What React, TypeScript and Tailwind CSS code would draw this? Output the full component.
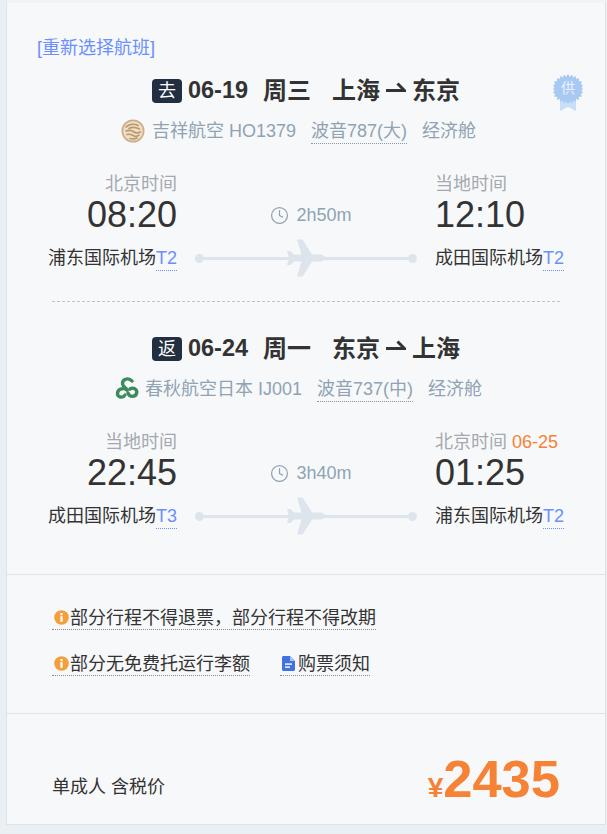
import type { ReactNode } from "react";
import { Clock } from "lucide-react";

const FONT = "font-['Liberation_Sans','Noto_Sans_CJK_SC',sans-serif]";

function Plane() {
  return (
    <svg width="38" height="38" viewBox="0 0 38 38" className="absolute left-1/2 top-1/2 -translate-x-1/2 -translate-y-1/2">
      <path
        d="M0 12 L3.5 12 L7 15.5 L14.5 15.5 L10 0.5 L15.5 0.5 L25 15.5 L33 15.5 C36 15.5 38 17.5 38 19 C38 20.5 36 22.5 33 22.5 L25 22.5 L15.5 37.5 L10 37.5 L14.5 22.5 L7 22.5 L3.5 26 L0 26 L2 19 Z"
        fill="#dde4eb"
      />
    </svg>
  );
}

function Arrow() {
  return (
    <svg width="20" height="12" viewBox="0 0 20 12" className="mx-[6px] -mt-[6px]">
      <path d="M0 8.5 H18.5 L11.5 1.5" fill="none" stroke="#333" strokeWidth="3" />
    </svg>
  );
}

function JuneyaoLogo() {
  return (
    <svg width="24" height="24" viewBox="0 0 24 24" className="mr-[7px] shrink-0">
      <circle cx="12" cy="12" r="11.5" fill="#cfae87" />
      <circle cx="12" cy="12" r="9.8" fill="#ecdfcd" />
      <g fill="none" stroke="#bd9868" strokeWidth="1.7" strokeLinecap="round">
        <path d="M5 8 C8 5 13 4.5 17 6.5" />
        <path d="M8 9.5 C11 7.8 15 8.5 18.5 10" />
        <path d="M5 12 C8 11 11 11.5 13 13 C15 14.5 17 14 19.5 13" />
        <path d="M6 15.5 C9 14.5 11 16 13 17 C15 17.8 17 17 18 16" />
        <path d="M9 19.5 C11 20 14 20 16 19" />
      </g>
    </svg>
  );
}

function SpringLogo() {
  return (
    <svg width="24" height="24" viewBox="0 0 24 24" className="mr-[6px] shrink-0">
      <g fill="none" stroke="#3d8a5f" strokeWidth="3.4" strokeLinecap="round">
        <path d="M17 4 C14 0.5 7.5 1.5 7.5 6.5 C7.5 10 11 10.5 12 13" />
        <path d="M12 13 C9 10.5 3 11.5 2.5 16 C2 20.5 8 21.5 10 18" />
        <path d="M13 16 C14.5 20.5 20.5 20.5 21.7 16 C22.5 12 18 10 15 12" />
      </g>
    </svg>
  );
}

function Badge() {
  return (
    <div className="absolute left-[546px] top-[71px] h-[38px] w-[30px]">
      <svg width="30" height="38" viewBox="0 0 30 38" className="absolute inset-0">
        <path d="M7 22 L7 37 L15 33 L23 37 L23 22 Z" fill="#c9def8" />
        <polygon
          fill="#a8caf2"
          points="15,0 16.8,2.7 19,0.6 20.1,3.6 22.7,2 23.1,5.1 26,4.1 25.8,7.2 28.9,7.2 28,10.2 30,11.2 28.4,13.9 30.5,15 28.4,16.1 30,18.8 27.9,19.8 28.9,22.8 25.8,22.8 26,25.9 23.1,24.9 22.7,28 20.1,26.4 19,29.4 16.8,27.3 15,30 13.2,27.3 11,29.4 9.9,26.4 7.3,28 6.9,24.9 4,25.9 4.2,22.8 1.1,22.8 2.1,19.8 0,18.8 1.6,16.1 -0.5,15 1.6,13.9 0,11.2 2,10.2 1.1,7.2 4.2,7.2 4,4.1 6.9,5.1 7.3,2 9.9,3.6 11,0.6 13.2,2.7"
        />
      </svg>
      <span className="absolute left-0 top-[3px] w-full text-center text-[14px] leading-[22px] text-[#eaf2fc]">供</span>
    </div>
  );
}

type Seg = {
  tag: string;
  date: string;
  week: string;
  from: string;
  to: string;
  logo: ReactNode;
  airline: string;
  plane: string;
  leftLabel: string;
  rightLabel: string;
  rightExtra?: string;
  dep: string;
  arr: string;
  dur: string;
  depAir: string;
  depT: string;
  arrAir: string;
  arrT: string;
};

function Segment({ s }: { s: Seg }) {
  return (
    <div>
      <div className="flex h-[36px] items-center justify-center text-[#333333]">
        <span className="flex h-[24px] w-[30px] items-center justify-center rounded-[4px] bg-[#222f40] text-[18px] leading-none font-normal text-white">
          {s.tag}
        </span>
        <span className="ml-[6px] text-[23.5px] font-bold">{s.date}</span>
        <span className="ml-[15px] text-[24px] font-bold">{s.week}</span>
        <span className="ml-[21px] text-[24px] font-bold">{s.from}</span>
        <Arrow />
        <span className="text-[24px] font-bold">{s.to}</span>
      </div>
      <div className="mt-[8px] flex h-[28px] items-center justify-center pr-[15px] text-[18px] text-[#90a3b3]">
        {s.logo}
        <span>{s.airline}</span>
        <span className="ml-[15px] h-[26px] border-b border-dotted border-[#8a98a6] leading-[26px]">{s.plane}</span>
        <span className="ml-[15px]">经济舱</span>
      </div>
      <div className="mt-[27px] grid grid-cols-[1fr_258px_1fr]">
        <div className="flex flex-col items-end">
          <div className="h-[24px] text-[18px] leading-[24px] text-[#a3a9ae]">{s.leftLabel}</div>
          <div className="mt-px h-[36px] text-[36px] leading-[36px] text-[#333333]">{s.dep}</div>
          <div className="mt-[13px] flex h-[24px] text-[18px] leading-[24px] text-[#333333]">
            {s.depAir}
            <span className="h-[25px] border-b border-dotted border-[#6b8ffb] text-[#6b8ffb]">{s.depT}</span>
          </div>
        </div>
        <div className="flex flex-col">
          <div className="mt-[25px] flex h-[36px] items-center justify-center pl-[10px] pt-[1px] text-[18px] text-[#90a3b3]">
            <Clock size={19} strokeWidth={1.6} className="mr-[7px] text-[#90a3b3]" />
            {s.dur}
          </div>
          <div className="relative mx-[18px] mt-[13px] flex h-[24px] items-center">
            <span className="h-[9px] w-[9px] rounded-full bg-[#dde4eb]" />
            <span className="h-[3px] flex-1 bg-[#dde4eb]" />
            <span className="h-[9px] w-[9px] rounded-full bg-[#dde4eb]" />
            <Plane />
          </div>
        </div>
        <div className="flex flex-col items-start">
          <div className="h-[24px] text-[18px] leading-[24px] text-[#a3a9ae]">
            {s.rightLabel}
            {s.rightExtra && <span className="ml-[5px] text-[#f58235]">{s.rightExtra}</span>}
          </div>
          <div className="mt-px h-[36px] text-[36px] leading-[36px] text-[#333333]">{s.arr}</div>
          <div className="mt-[13px] flex h-[24px] text-[18px] leading-[24px] text-[#333333]">
            {s.arrAir}
            <span className="h-[25px] border-b border-dotted border-[#6b8ffb] text-[#6b8ffb]">{s.arrT}</span>
          </div>
        </div>
      </div>
    </div>
  );
}

function InfoIcon() {
  return (
    <svg width="15" height="15" viewBox="0 0 15 15" className="mr-px ml-[2px] shrink-0">
      <circle cx="7.5" cy="7.5" r="7.3" fill="#f3a03c" />
      <rect x="6.4" y="3" width="2.2" height="2.2" fill="#fff" />
      <rect x="6.4" y="6.2" width="2.2" height="5.6" fill="#fff" />
    </svg>
  );
}

function DocIcon() {
  return (
    <svg width="13" height="15" viewBox="0 0 13 15" className="mr-[3px] ml-[2px] shrink-0">
      <path d="M1.5 0 H8 L13 5 V13.5 C13 14.4 12.4 15 11.5 15 H1.5 C0.6 15 0 14.4 0 13.5 V1.5 C0 0.6 0.6 0 1.5 0 Z" fill="#3f74e0" />
      <path d="M8 0 V5 H13 Z" fill="#a9c4f3" />
      <rect x="3" y="7.4" width="7" height="1.4" fill="#fff" />
      <rect x="3" y="10.4" width="5" height="1.4" fill="#fff" />
    </svg>
  );
}

const note = "flex h-[24px] items-center border-b border-dotted border-[#8a8a8a] text-[18px] leading-[24px] text-[#333333]";

const seg1: Seg = {
  tag: "去",
  date: "06-19",
  week: "周三",
  from: "上海",
  to: "东京",
  logo: <JuneyaoLogo />,
  airline: "吉祥航空 HO1379",
  plane: "波音787(大)",
  leftLabel: "北京时间",
  rightLabel: "当地时间",
  dep: "08:20",
  arr: "12:10",
  dur: "2h50m",
  depAir: "浦东国际机场",
  depT: "T2",
  arrAir: "成田国际机场",
  arrT: "T2",
};

const seg2: Seg = {
  tag: "返",
  date: "06-24",
  week: "周一",
  from: "东京",
  to: "上海",
  logo: <SpringLogo />,
  airline: "春秋航空日本 IJ001",
  plane: "波音737(中)",
  leftLabel: "当地时间",
  rightLabel: "北京时间",
  rightExtra: "06-25",
  dep: "22:45",
  arr: "01:25",
  dur: "3h40m",
  depAir: "成田国际机场",
  depT: "T3",
  arrAir: "浦东国际机场",
  arrT: "T2",
};

export default function App() {
  return (
    <div className={`${FONT} h-[834px] w-[607px] overflow-hidden bg-[#e9eff2] pl-[6px]`}>
      <div className="relative h-[825px] w-[600px] border-x border-b border-t-[3px] border-x-[#dde3e8] border-b-[#dde3e8] border-t-[#f0f2f4] bg-[#f7f8fa]">
        <div className="h-[571px] pl-[30px] pt-[33px]">
          <div className="h-[24px] text-[18px] leading-[24px] text-[#6b8ffb]">[重新选择航班]</div>
          <div className="-ml-[30px] mt-[12px] pt-px">
            <Segment s={seg1} />
            <div className="mx-[45px] mt-[31px] border-t border-dashed border-[#bfc3cc]" />
            <div className="mt-[29px]">
              <Segment s={seg2} />
            </div>
          </div>
        </div>
        <Badge />
        <div className="h-[140px] border-y border-[#e0e4e9] pl-[45px] pt-[31px]">
          <div className="flex">
            <div className={note}>
              <InfoIcon />
              部分行程不得退票，部分行程不得改期
            </div>
          </div>
          <div className="mt-[22px] flex">
            <div className={note}>
              <InfoIcon />
              部分无免费托运行李额
            </div>
            <div className={`${note} ml-[30px]`}>
              <DocIcon />
              购票须知
            </div>
          </div>
        </div>
        <div className="flex h-[109px] items-end justify-between pl-[45px] pr-[45px]">
          <div className="mb-[24px] text-[18px] leading-[24px] text-[#333333]">单成人 含税价</div>
          <div className="mb-[14px] flex items-baseline font-bold text-[#f58235]">
            <span className="text-[28px] leading-none">¥</span>
            <span className="text-[52.5px] leading-[60px]">2435</span>
          </div>
        </div>
      </div>
    </div>
  );
}
